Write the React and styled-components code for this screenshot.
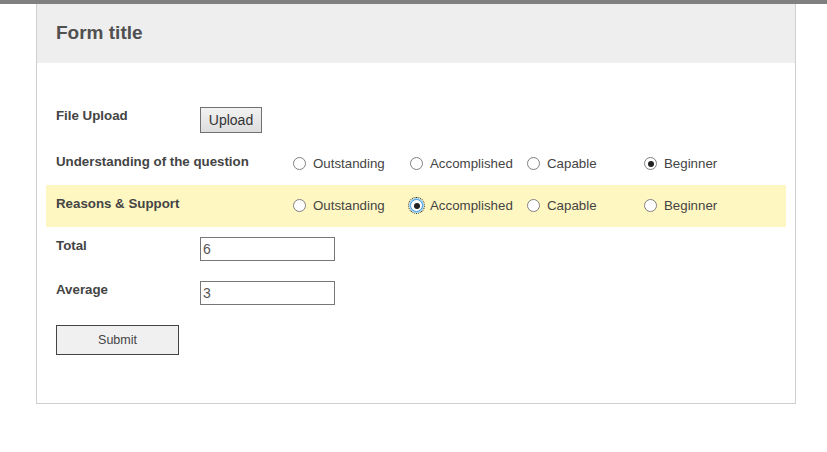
import React, { useState } from 'react';
import styled, { createGlobalStyle } from 'styled-components';

const GlobalStyle = createGlobalStyle`
    body{
        margin: 0;
        background: #fff;
        font-family: "Liberation Sans", Arial, sans-serif;
    }
`;

const options = ['Outstanding', 'Accomplished', 'Capable', 'Beginner'];

function RadioGroup({ name, value, focused, onChange }) {
    return (
        <Options>
            {options.map((opt) => (
                <Option key={opt} onClick={() => onChange(opt)}>
                    <Dot checked={value === opt} focused={focused && value === opt} />
                    <span>{opt}</span>
                </Option>
            ))}
        </Options>
    );
}

function App() {
    const [understanding, setUnderstanding] = useState('Beginner');
    const [reasons, setReasons] = useState('Accomplished');

    return (
        <>
            <GlobalStyle />
            <TopBar />
            <Form>
                <Header>
                    <h1>Form title</h1>
                </Header>
                <Body>
                    <Row>
                        <Label>File Upload</Label>
                        <UploadButton type="button">Upload</UploadButton>
                    </Row>
                    <Row>
                        <Label wide>Understanding of the question</Label>
                        <RadioGroup name="understanding" value={understanding} onChange={setUnderstanding} />
                    </Row>
                    <Row highlight>
                        <Label wide>Reasons &amp; Support</Label>
                        <RadioGroup name="reasons" value={reasons} focused onChange={setReasons} />
                    </Row>
                    <Row>
                        <Label>Total</Label>
                        <Input defaultValue="6" />
                    </Row>
                    <Row>
                        <Label>Average</Label>
                        <Input defaultValue="3" />
                    </Row>
                    <Row>
                        <SubmitButton type="button">Submit</SubmitButton>
                    </Row>
                </Body>
            </Form>
        </>
    );
}

const TopBar = styled.div`
    height: 4px;
    background: #808080;
`;

const Form = styled.div`
    box-sizing: border-box;
    margin-left: 36px;
    width: 760px;
    height: 400px;
    border: 1px solid #cfcfcf;
    border-top: none;
`;

const Header = styled.div`
    height: 59px;
    background: #eeeeee;
    display: flex;
    align-items: center;
    padding-left: 19px;

    h1{
        margin: 0;
        font-size: 19px;
        font-weight: bold;
        color: #505050;
        padding-bottom: 2px;
    }
`;

const Body = styled.div`
    padding: 34px 9px 0 9px;
`;

const Row = styled.div`
    box-sizing: border-box;
    display: flex;
    align-items: flex-start;
    min-height: 42px;
    padding: 10px 10px;
    background: ${(p) => (p.highlight ? '#fff7c2' : 'transparent')};
`;

const Label = styled.div`
    flex: 0 0 ${(p) => (p.wide ? '237px' : '144px')};
    font-size: 13.3px;
    font-weight: bold;
    line-height: 17px;
    color: #444;
`;

const UploadButton = styled.button`
    box-sizing: border-box;
    width: 62px;
    height: 26px;
    padding: 0;
    font-family: inherit;
    font-size: 14px;
    color: #333;
    background: linear-gradient(#f2f2f2, #dddddd);
    border: 1px solid #707070;
    border-radius: 0;
`;

const Options = styled.div`
    display: flex;
`;

const Option = styled.label`
    flex: 0 0 117px;
    display: flex;
    align-items: center;
    height: 21px;
    font-size: 13.3px;
    color: #444;
    cursor: default;
`;

const Dot = styled.span`
    box-sizing: border-box;
    position: relative;
    width: 13px;
    height: 13px;
    margin-right: 7px;
    border-radius: 50%;
    border: 1px solid ${(p) => (p.focused ? '#3b9de1' : '#808080')};
    background: #fff;
    box-shadow: ${(p) => (p.focused ? '0 0 0 1px #a6d4f5' : 'none')};
    outline: ${(p) => (p.focused ? '1px dotted #222' : 'none')};
    outline-offset: 1px;

    &::after{
        content: '';
        display: ${(p) => (p.checked ? 'block' : 'none')};
        position: absolute;
        left: 2.5px;
        top: 2.5px;
        width: 6px;
        height: 6px;
        border-radius: 50%;
        background: #222;
    }
`;

const Input = styled.input`
    box-sizing: border-box;
    width: 135px;
    height: 24px;
    padding: 0 2px;
    font-family: inherit;
    font-size: 14px;
    color: #555;
    border: 1px solid #777;
    border-radius: 0;
    outline: none;
`;

const SubmitButton = styled.button`
    box-sizing: border-box;
    width: 123px;
    height: 30px;
    padding: 0;
    font-family: inherit;
    font-size: 12.5px;
    color: #444;
    background: #f0f0f0;
    border: 1px solid #444;
    border-radius: 0;
`;

export default App;
